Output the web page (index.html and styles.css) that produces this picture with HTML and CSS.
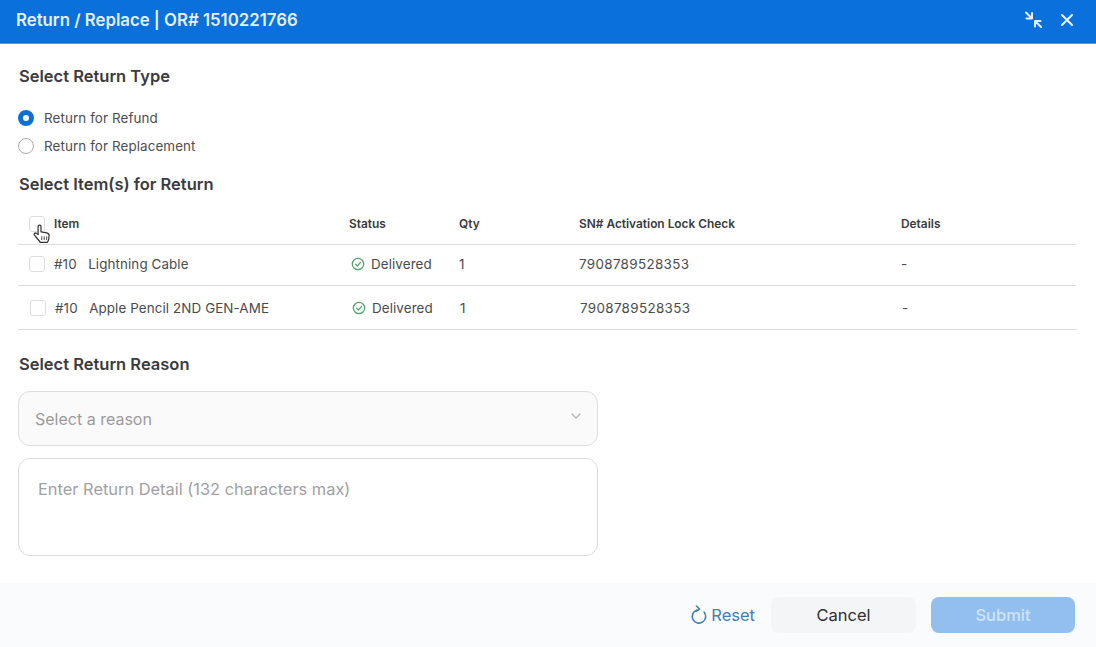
FILE: index.html
```html
<!DOCTYPE html>
<html lang="en">
<head>
<meta charset="utf-8">
<title>Return / Replace</title>
<link rel="stylesheet" href="styles.css">
</head>
<body>
<div class="dialog">
  <header class="titlebar">
    <h1 class="title">Return / Replace | OR# 1510221766</h1>
    <div class="title-actions">
      <svg class="icon-collapse" width="20" height="20" viewBox="0 0 20 20" fill="none" stroke="#e4f1ff" stroke-width="2" stroke-linecap="round" stroke-linejoin="round"><path d="M2 2.500l6 6M8 3V8.500H2.500"/><path d="M17 17l-6-6M11 16.500V11h5.500"/></svg>
      <svg class="icon-close" width="14" height="14" viewBox="0 0 14 14" fill="none" stroke="#e9f4ff" stroke-width="2" stroke-linecap="round"><path d="M2 2l10 10M12 2L2 12"/></svg>
    </div>
  </header>

  <main class="content">
    <h2 class="section-title type-title">Select Return Type</h2>
    <div class="radio-group">
      <div class="radio-row"><span class="radio radio-on"></span><span>Return for Refund</span></div>
      <div class="radio-row"><span class="radio"></span><span>Return for Replacement</span></div>
    </div>

    <h2 class="section-title items-title">Select Item(s) for Return</h2>
    <div class="table">
      <div class="row head">
        <span class="check-wrap">
          <span class="check"></span>
          <svg class="cursor" width="18" height="20" viewBox="0 0 16 18" fill="#fff" stroke="#333" stroke-width="1.100" stroke-linejoin="round" stroke-linecap="round"><path d="M4.500 9.500V2.300a1.300 1.300 0 0 1 2.600 0v4.700l5.200.9c1.400.3 2.200 1.200 2.100 2.600l-.4 3.500c-.2 1-.6 1.700-1.300 2.500H6.500c-.6-1-1.500-2-2.500-3L1.200 10c-.9-1.200.7-2.600 1.800-1.500z"/><path d="M7.800 14v-2.500M10 14v-2.500M12.200 14v-2.500" stroke-width="0.800"/></svg>
        </span>
        <span>Item</span><span>Status</span><span>Qty</span><span>SN# Activation Lock Check</span><span>Details</span>
      </div>
      <div class="row item">
        <span class="check-wrap"><span class="check"></span></span>
        <span><span class="line-no">#10</span>Lightning Cable</span>
        <span class="status"><svg width="14" height="14" viewBox="0 0 14 14" fill="none" stroke="#4fa56b" stroke-width="1.200" stroke-linecap="round" stroke-linejoin="round"><circle cx="7" cy="7" r="5.700"/><path d="M4.500 7.200l1.800 1.800 3.300-3.600"/></svg>Delivered</span>
        <span>1</span><span class="serial">7908789528353</span><span>-</span>
      </div>
      <div class="row item item-shift">
        <span class="check-wrap"><span class="check"></span></span>
        <span><span class="line-no">#10</span>Apple Pencil 2ND GEN-AME</span>
        <span class="status"><svg width="14" height="14" viewBox="0 0 14 14" fill="none" stroke="#4fa56b" stroke-width="1.200" stroke-linecap="round" stroke-linejoin="round"><circle cx="7" cy="7" r="5.700"/><path d="M4.500 7.200l1.800 1.800 3.300-3.600"/></svg>Delivered</span>
        <span>1</span><span class="serial">7908789528353</span><span>-</span>
      </div>
    </div>

    <h2 class="section-title reason-title">Select Return Reason</h2>
    <div class="select">
      <span>Select a reason</span>
      <svg width="10" height="6" viewBox="0 0 10 6" fill="none" stroke="#b5b5b5" stroke-width="1.200" stroke-linecap="round" stroke-linejoin="round"><path d="M1 1l4 4 4-4"/></svg>
    </div>
    <div class="textarea">Enter Return Detail (132 characters max)</div>
  </main>

  <footer class="footer">
    <div class="reset">
      <svg width="18" height="20" viewBox="0 0 18 20" fill="none" stroke="#3f7fb5" stroke-width="1.600" stroke-linecap="round" stroke-linejoin="round"><path d="M6.500 5.200A6.700 6.700 0 1 0 14 7"/><path d="M7.500 1.500l3 3-3.500 2.200" transform="translate(-1 -.5)"/></svg>
      <span>Reset</span>
    </div>
    <div class="btn btn-cancel">Cancel</div>
    <div class="btn btn-submit">Submit</div>
  </footer>
</div>
</body>
</html>
```
FILE: styles.css
```css
* { box-sizing: border-box; }
html, body { margin: 0; height: 100%; overflow: hidden; }
body { background: #fff; font-family: Inter, "Liberation Sans", sans-serif; color: #3a3a3c; }
.dialog { display: flex; flex-direction: column; width: 1096px; height: 647px; }

.titlebar { flex: 0 0 44px; display: flex; align-items: center; justify-content: space-between; padding: 0 22px 4px 16px; background: #0a70dc; border-bottom: 1px solid #4d9be8; }
.title { margin: 0; font-size: 16.800px; font-weight: 600; line-height: 20px; color: #e4f1ff; }
.title-actions { display: flex; align-items: center; gap: 16px; }

.content { flex: 1; padding: 0 20px 0 18px; }
.section-title { margin: 0 0 0 1px; font-size: 16.500px; font-weight: 600; line-height: 20px; color: #3b3b3d; }
.type-title { padding-top: 22px; }
.radio-group { display: flex; flex-direction: column; gap: 8px; margin-top: 22px; }
.radio-row { display: flex; align-items: center; gap: 10px; height: 20px; font-size: 13.400px; color: #4d4d50; letter-spacing: 0.1px; }
.radio { width: 16px; height: 16px; border-radius: 50%; border: 1px solid #a9a9ab; background: #fff; }
.radio-on { border: 5.500px solid #0f6fd2; }
.items-title { margin-top: 18px; }

.table { margin-top: 10px; }
.row { display: grid; grid-template-columns: 25px 295px 110px 120px 322px 1fr; align-items: center; border-bottom: 1px solid #dcdcde; font-size: 13.400px; color: #4a4a4d; padding-left: 11px; letter-spacing: 0.1px; }
.head { height: 41px; padding-bottom: 1px; font-size: 11.900px; font-weight: 600; color: #3a3a3c; letter-spacing: 0; }
.item { height: 41px; padding-bottom: 3px; }
.item-shift { height: 44px; margin-right: -1px; padding-left: 12px; padding-top: 1px; padding-bottom: 0; }
.check-wrap { position: relative; display: flex; }
.check { width: 16px; height: 16px; border: 1px solid #dedee0; border-radius: 3px; background: #fff; }
.cursor { position: absolute; left: 4px; top: 8px; }
.line-no { margin-right: 11.500px; }
.status { display: flex; align-items: center; gap: 6px; margin-left: 2px; }
.serial { letter-spacing: 0.35px; }

.reason-title { margin-top: 24px; }
.select { display: flex; align-items: center; justify-content: space-between; width: 580px; height: 55px; margin-top: 17px; padding: 0 16px 0 16px; border: 1px solid #dcdcde; border-radius: 12px; background: #fafafa; font-size: 16px; color: #9a9a9c; }
.select svg { margin-top: -6px; }
.textarea { width: 580px; height: 98px; margin-top: 12px; padding: 20px 19px; border: 1px solid #dcdcde; border-radius: 12px; background: #fff; font-size: 16.400px; line-height: 20px; color: #a0a0a2; }

.footer { flex: 0 0 64px; display: flex; align-items: center; justify-content: flex-end; padding: 0 21px 0 0; background: #fafbfd; }
.reset { display: flex; align-items: center; gap: 3px; margin-right: 16px; font-size: 16.500px; color: #3f7fb5; }
.btn { display: flex; align-items: center; justify-content: center; width: 145px; height: 36px; border-radius: 8px; font-size: 16.500px; }
.btn-cancel { background: #f4f5f6; color: #2f2f31; margin-right: 15px; }
.btn-submit { width: 144px; background: #93bfee; color: #cfe3f8; font-weight: 500; }
```
